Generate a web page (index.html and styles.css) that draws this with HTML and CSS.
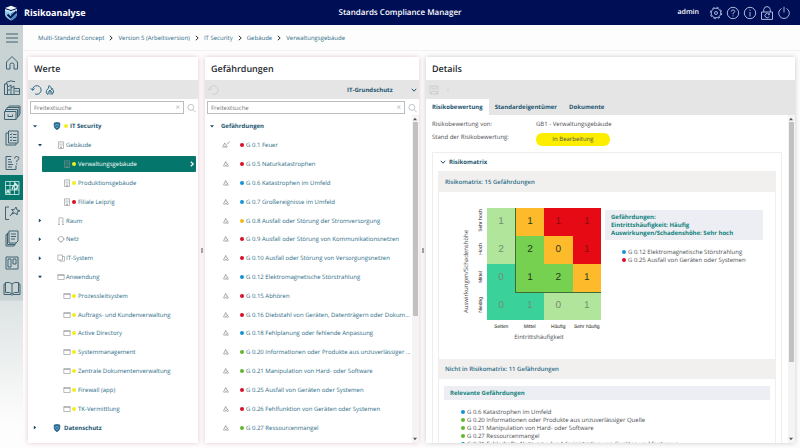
FILE: index.html
```html
<!DOCTYPE html>
<html lang="de">
<head>
    <meta charset="UTF-8">
    <meta name="viewport" content="width=device-width, initial-scale=1.0">
    <title>Risikoanalyse | Standards Compliance Manager</title>
    <link rel="stylesheet" href="styles.css">
</head>
<body>

    <!-- Icon symbols -->
    <svg class="sprite" aria-hidden="true">
        <symbol id="i-shield" viewBox="0 0 10 10"><path d="M1.5 1.2Q5 0 8.5 1.2V5Q8.500 8 5 9.700Q1.500 8 1.500 5Z" fill="#1f6c93" stroke="#174f70" stroke-width=".8"/><path d="M3.500 3H6.500V5.500L5 7.500L3.500 5.500Z" fill="none" stroke="#8fc0d8" stroke-width=".8"/></symbol>
        <symbol id="i-building" viewBox="0 0 8 8"><path d="M1.500.8H6.500V7.500H1.500ZM3.500 7.500V6H4.500V7.500" /><path d="M2.600 2.200H5.400M2.600 3.500H5.400M2.600 4.800H5.400" stroke-dasharray="1 .8"/></symbol>
        <symbol id="i-door" viewBox="0 0 8 8"><path d="M2 7.500V.8H6V7.500M1 7.500H3M5 7.500H7M5 4V5"/></symbol>
        <symbol id="i-net" viewBox="0 0 8 8"><circle cx="4" cy="4" r="2.600"/><path d="M0 4H2M6 4H8M3 6.500L4 7.500L5 6.500"/></symbol>
        <symbol id="i-system" viewBox="0 0 8 8"><path d="M.8 1H5.500V6H.8ZM5.500 2.500H7.500V7.200H3V6"/></symbol>
        <symbol id="i-window" viewBox="0 0 8 8"><path d="M.8 1.500H7.200V6.500H.8ZM.8 2.500H7.200"/></symbol>
        <symbol id="i-flame" viewBox="0 0 8 8"><path d="M2.300 6.800Q1 5.500 2.500 4L3.700 1.500Q4.200 3 5.200 4Q6.900 5.700 5.700 6.800M3.300 6.500Q3.100 5.500 4 4.800Q4.900 5.500 4.700 6.500"/></symbol>
        <symbol id="i-flame-large" viewBox="0 0 12 12"><path d="M4 10.500Q1 9 2.500 6.500Q4.500 5 5.200 1.500Q7.500 3 7.500 5.500L8.500 4.500Q11 8.500 8 10.500Q8.500 8 6 6Q3.500 8.500 4 10.500ZM6 6V10.500"/></symbol>
        <symbol id="i-flame-check" viewBox="0 0 8 8"><path d="M1.200 6.800Q.4 5.500 1.700 4L2.700 2Q3.200 3 4.200 4Q5.500 5.700 4.500 6.800M2.300 6.500Q2.200 5.500 2.900 4.900Q3.700 5.500 3.500 6.500M5.300 1.800L6 2.600L7.500.5"/></symbol>
        <symbol id="i-undo" viewBox="0 0 12 12"><path d="M2.500 6A4.300 4.300 0 1 1 5 9.900M.7 4.300L2.500 6.300L4.600 4.600"/></symbol>
        <symbol id="i-search" viewBox="0 0 10 10"><circle cx="4.300" cy="4.300" r="3.300"/><path d="M6.700 6.700L9.500 9.500"/></symbol>
        <symbol id="i-down" viewBox="0 0 6 6"><path d="M.8 1.800L3 4.200L5.200 1.800"/></symbol>
        <symbol id="i-right" viewBox="0 0 6 6"><path d="M1.800.8L4.200 3L1.800 5.200"/></symbol>
    </svg>

    <header class="topbar">
        <div class="brand">
            <svg class="logo" viewBox="0 0 14 16" aria-hidden="true">
                <path d="M1 4V10Q2 13 7 15.500Q12 13 13 10V4L7 6Z" fill="#8fc3e4"/>
                <path d="M1 3L7 .8L13 3L7 5Z" fill="#f0f8fc"/>
                <path d="M1 4.200L7 6.200L13 4.200V6L7 8L1 6Z" fill="#c3e3f2"/>
                <path d="M7 8L13 6V10Q12 13 7 15.500Z" fill="#4d8fc0"/>
                <path d="M3.500 9.500L6.500 12.500L12.500 6.500" fill="none" stroke="#071250" stroke-width="1.800"/>
            </svg>
            <h1>Risikoanalyse</h1>
        </div>
        <strong class="product">Standards Compliance Manager</strong>
        <div class="user">
            <span class="user-name">admin</span>
            <button class="icon-btn" aria-label="Einstellungen"><svg viewBox="0 0 14 14"><circle cx="7" cy="7" r="4.800"/><circle cx="7" cy="7" r="5.700" stroke-dasharray="2.200 2.270"/><circle cx="7" cy="7" r="1.500"/></svg></button>
            <button class="icon-btn" aria-label="Hilfe"><svg viewBox="0 0 14 14"><circle cx="7" cy="7" r="5.700"/><path d="M5.200 5.600Q5.300 3.900 7 3.900Q8.800 4 8.800 5.500Q8.700 6.500 7 7.200V8.300M7 9.400V10.400"/></svg></button>
            <button class="icon-btn" aria-label="Info"><svg viewBox="0 0 14 14"><circle cx="7" cy="7" r="5.700"/><path d="M7 6V10.500M7 3.600V4.800"/></svg></button>
            <button class="icon-btn" aria-label="Passwort"><svg viewBox="0 0 14 14"><path d="M1.500 6H12.500V13.400H1.500ZM3.700 6V3.600Q4 .6 7 .6Q10 .6 10.300 3.600V6"/><path d="M9 8.300A2.200 2.200 0 1 0 9.200 10.500M9.500 7.300V8.700H8"/></svg></button>
            <button class="icon-btn" aria-label="Abmelden"><svg viewBox="0 0 14 14"><path d="M4.500 2.500A5.300 5.300 0 1 0 9.500 2.500M7 .8V6.500"/></svg></button>
        </div>
    </header>

    <div class="layout">
        <nav class="sidebar">
            <a href="#" aria-label="Menü"><svg viewBox="0 0 18 18"><path d="M3 5H15M3 9H15M3 13H15"/></svg></a>
            <a href="#" aria-label="Start"><svg viewBox="0 0 18 18"><path d="M3.500 8L9 2.500L14.500 8V15H11V10.500Q11 9 9 9Q7 9 7 10.500V15H3.500Z"/></svg></a>
            <a href="#" aria-label="Werte"><svg viewBox="0 0 18 18"><path d="M1.500 15.500V5H4.500V15.500M4.500 8L8 6V15.500M8 9L11 7V15.500M11 9.500H16.500V15.500H1.500M3 5Q3 2.500 6 2.500Q8 1 10 2.500H12M13 11.500V13M15 11.500V13M6 10V12"/></svg></a>
            <a href="#" aria-label="Ablage"><svg viewBox="0 0 18 18"><path d="M1.500 7.500H13V15.500H1.500ZM2.500 7.500V5.500H14.500V13.500L13 15.500M4 5.500V3.500H16V11.500L14.500 13.500M6 3.500V2H17V9.500L16 11.500M5 10.500V12.500H9.500V10.500"/></svg></a>
            <a href="#" aria-label="Checkliste"><svg viewBox="0 0 18 18"><path d="M5.500 2H15V14H5.500ZM5.500 4H3V16H13V14M7 5L8 6L9 4.500M10 5.500H13.500M7 8L8 9L9 7.500M10 8.500H13.500M7 11L8 12L9 10.500M10 11.500H13.500"/></svg></a>
            <a href="#" aria-label="Fragen"><svg viewBox="0 0 18 18"><path d="M8.500 2.500H3V15.500H13V11.500M5 5.500H8M5 8H9M5 10.500H10M5 13H9"/><path d="M11.500 4.500Q11.500 2.500 13.700 2.500Q16 2.600 15.900 4.500Q15.800 5.700 13.700 6.800V8M13.700 9.200V10.500"/></svg></a>
            <a class="active" href="#" aria-label="Risikoanalyse"><svg viewBox="0 0 18 18"><path d="M2.500 2.500V15.500H16M2.500 6.500H16M2.500 11H16M7 2.500V15.500M11.500 2.500V15.500M16 2.500V15.500M2.500 2.500H16" stroke-width=".8"/><path d="M9.500 10.500Q9 8 11 6.500L12.500 4.500Q14.500 6 14.500 8.500Q13 11 11 10M3.800 14.500Q3.500 12.500 5 11.500Q6.500 13 6 14.500" stroke-width="1.500"/></svg></a>
            <a href="#" aria-label="Maßnahmen"><svg viewBox="0 0 18 18"><path d="M6 3H2.500V15.500H6M7 12L10 8.500M8.500 5.500L11.300 5.700L13 3L14 6L17 6.700L14.200 8L14.200 11L12 8.800L9 10L10.300 7.300Z"/></svg></a>
            <a href="#" aria-label="Berichte"><svg viewBox="0 0 18 18"><path d="M6 2H15V12L13 14H6ZM6 4H4.500V15.500H12L13 14M4.500 5.500H3V17H11L12 15.500M8 5H13M8 7.500H13M8 10H12"/></svg></a>
            <a href="#" aria-label="Übersicht"><svg viewBox="0 0 18 18"><path d="M3 3H15V15H3ZM5 5H8V13H5ZM10 5H13V10H10Z"/></svg></a>
            <a href="#" aria-label="Handbuch"><svg viewBox="0 0 18 18"><path d="M9 5Q7 2.800 2.500 3.500V13.500Q7 12.800 9 15Q11 12.800 15.500 13.500V3.500Q11 2.800 9 5V15M2.500 5H1V15.500H8L9 16.500L10 15.500H17V5H15.500"/></svg></a>
        </nav>

        <main class="content">
            <nav class="breadcrumb" aria-label="Pfad">
                <a href="#">Multi-Standard Concept</a>
                <svg class="chev"><use href="#i-right"/></svg>
                <a href="#">Version 5 (Arbeitsversion)</a>
                <svg class="chev"><use href="#i-right"/></svg>
                <a href="#">IT Security</a>
                <svg class="chev"><use href="#i-right"/></svg>
                <a href="#">Gebäude</a>
                <svg class="chev"><use href="#i-right"/></svg>
                <a href="#">Verwaltungsgebäude</a>
            </nav>

            <div class="panels">
                <!-- Werte -->
                <section class="panel panel-values">
                    <h2>Werte</h2>
                    <div class="toolbar">
                        <button class="tool" aria-label="Zurücksetzen"><svg><use href="#i-undo"/></svg></button>
                        <button class="tool" aria-label="Gefährdungen filtern"><svg><use href="#i-flame-large"/></svg></button>
                    </div>
                    <div class="search">
                        <div class="search-box">
                            <input type="text" placeholder="Freitextsuche" aria-label="Werte durchsuchen">
                            <button class="clear" aria-label="Leeren">×</button>
                        </div>
                        <button class="find" aria-label="Suchen"><svg><use href="#i-search"/></svg></button>
                    </div>
                    <ul class="tree">
                        <li class="root"><i class="open"></i><svg><use href="#i-shield"/></svg><b class="dot yellow"></b><a href="#">IT Security</a></li>
                        <li class="group"><i class="open"></i><svg><use href="#i-building"/></svg><a href="#">Gebäude</a></li>
                        <li class="leaf selected"><svg><use href="#i-building"/></svg><b class="dot yellow"></b><a href="#">Verwaltungsgebäude</a><svg class="chev"><use href="#i-right"/></svg></li>
                        <li class="leaf"><svg><use href="#i-building"/></svg><b class="dot yellow"></b><a href="#">Produktionsgebäude</a></li>
                        <li class="leaf"><svg><use href="#i-building"/></svg><b class="dot red"></b><a href="#">Filiale Leipzig</a></li>
                        <li class="group"><i class="closed"></i><svg><use href="#i-door"/></svg><a href="#">Raum</a></li>
                        <li class="group"><i class="closed"></i><svg><use href="#i-net"/></svg><a href="#">Netz</a></li>
                        <li class="group"><i class="closed"></i><svg><use href="#i-system"/></svg><a href="#">IT-System</a></li>
                        <li class="group"><i class="open"></i><svg><use href="#i-window"/></svg><a href="#">Anwendung</a></li>
                        <li class="leaf"><svg><use href="#i-window"/></svg><b class="dot yellow"></b><a href="#">Prozessleitsystem</a></li>
                        <li class="leaf"><svg><use href="#i-window"/></svg><b class="dot yellow"></b><a href="#">Auftrags- und Kundenverwaltung</a></li>
                        <li class="leaf"><svg><use href="#i-window"/></svg><b class="dot yellow"></b><a href="#">Active Directory</a></li>
                        <li class="leaf"><svg><use href="#i-window"/></svg><b class="dot yellow"></b><a href="#">Systemmanagement</a></li>
                        <li class="leaf"><svg><use href="#i-window"/></svg><b class="dot yellow"></b><a href="#">Zentrale Dokumentenverwaltung</a></li>
                        <li class="leaf"><svg><use href="#i-window"/></svg><b class="dot yellow"></b><a href="#">Firewall (app)</a></li>
                        <li class="leaf"><svg><use href="#i-window"/></svg><b class="dot yellow"></b><a href="#">TK-Vermittlung</a></li>
                        <li class="root"><i class="closed"></i><svg><use href="#i-shield"/></svg><a href="#">Datenschutz</a></li>
                    </ul>
                </section>

                <div class="splitter"></div>

                <!-- Gefährdungen -->
                <section class="panel panel-threats">
                    <h2>Gefährdungen</h2>
                    <div class="toolbar">
                        <button class="tool" aria-label="Zurücksetzen" disabled><svg><use href="#i-undo"/></svg></button>
                        <div class="catalog">
                            <select aria-label="Katalog"><option>IT-Grundschutz</option></select>
                            <svg class="chev"><use href="#i-down"/></svg>
                        </div>
                    </div>
                    <div class="search">
                        <div class="search-box">
                            <input type="text" placeholder="Freitextsuche" aria-label="Gefährdungen durchsuchen">
                            <button class="clear" aria-label="Leeren">×</button>
                        </div>
                        <button class="find" aria-label="Suchen"><svg><use href="#i-search"/></svg></button>
                    </div>
                    <div class="scroll-area">
                        <ul class="tree">
                            <li class="root"><i class="open"></i><a href="#">Gefährdungen</a></li>
                            <li class="threat"><svg><use href="#i-flame-check"/></svg><b class="dot red"></b><a href="#">G 0.1 Feuer</a></li>
                            <li class="threat"><svg><use href="#i-flame"/></svg><b class="dot red"></b><a href="#">G 0.5 Naturkatastrophen</a></li>
                            <li class="threat"><svg><use href="#i-flame"/></svg><b class="dot blue"></b><a href="#">G 0.6 Katastrophen im Umfeld</a></li>
                            <li class="threat"><svg><use href="#i-flame"/></svg><b class="dot blue"></b><a href="#">G 0.7 Großereignisse im Umfeld</a></li>
                            <li class="threat"><svg><use href="#i-flame"/></svg><b class="dot orange"></b><a href="#">G 0.8 Ausfall oder Störung der Stromversorgung</a></li>
                            <li class="threat"><svg><use href="#i-flame"/></svg><b class="dot red"></b><a href="#">G 0.9 Ausfall oder Störung von Kommunikationsnetzen</a></li>
                            <li class="threat"><svg><use href="#i-flame"/></svg><b class="dot red"></b><a href="#">G 0.10 Ausfall oder Störung von Versorgungsnetzen</a></li>
                            <li class="threat"><svg><use href="#i-flame"/></svg><b class="dot blue"></b><a href="#">G 0.12 Elektromagnetische Störstrahlung</a></li>
                            <li class="threat"><svg><use href="#i-flame"/></svg><b class="dot red"></b><a href="#">G 0.15 Abhören</a></li>
                            <li class="threat"><svg><use href="#i-flame"/></svg><b class="dot red"></b><a href="#">G 0.16 Diebstahl von Geräten, Datenträgern oder Dokum...</a></li>
                            <li class="threat"><svg><use href="#i-flame"/></svg><b class="dot blue"></b><a href="#">G 0.18 Fehlplanung oder fehlende Anpassung</a></li>
                            <li class="threat"><svg><use href="#i-flame"/></svg><b class="dot green"></b><a href="#">G 0.20 Informationen oder Produkte aus unzuverlässiger ...</a></li>
                            <li class="threat"><svg><use href="#i-flame"/></svg><b class="dot green"></b><a href="#">G 0.21 Manipulation von Hard- oder Software</a></li>
                            <li class="threat"><svg><use href="#i-flame"/></svg><b class="dot red"></b><a href="#">G 0.25 Ausfall von Geräten oder Systemen</a></li>
                            <li class="threat"><svg><use href="#i-flame"/></svg><b class="dot red"></b><a href="#">G 0.26 Fehlfunktion von Geräten oder Systemen</a></li>
                            <li class="threat"><svg><use href="#i-flame"/></svg><b class="dot green"></b><a href="#">G 0.27 Ressourcenmangel</a></li>
                        </ul>
                        <div class="scrollbar"><i class="up"></i><span class="thumb thumb-short"></span><i class="down"></i></div>
                    </div>
                </section>

                <div class="splitter"></div>

                <!-- Details -->
                <section class="panel panel-details">
                    <h2>Details</h2>
                    <div class="toolbar">
                        <button class="tool" aria-label="Speichern" disabled><svg viewBox="0 0 12 12"><path d="M2 2H10V10H2ZM4 2V5H8V2M3.500 10V7.500H8.500V10"/></svg></button>
                        <button class="tool tool-close" aria-label="Verwerfen" disabled>×</button>
                    </div>
                    <div class="tabs" role="tablist">
                        <button class="tab active" role="tab" aria-selected="true">Risikobewertung</button>
                        <button class="tab" role="tab">Standardeigentümer</button>
                        <button class="tab" role="tab">Dokumente</button>
                    </div>
                    <div class="scroll-area">
                        <div class="details">
                            <dl class="facts">
                                <dt>Risikobewertung von:</dt>
                                <dd>GB1 - Verwaltungsgebäude</dd>
                                <dt>Stand der Risikobewertung:</dt>
                                <dd><span class="pill">In Bearbeitung</span></dd>
                            </dl>

                            <div class="fieldset">
                                <h3><svg class="chev"><use href="#i-down"/></svg>Risikomatrix</h3>
                                <div class="card">
                                    <h4>Risikomatrix: 15 Gefährdungen</h4>
                                    <div class="matrix-row">
                                        <div class="matrix-wrap">
                                            <span class="axis-y">Auswirkungen/Schadenshöhe</span>
                                            <div class="matrix-col">
                                                <table class="matrix">
                                                    <tbody>
                                                        <tr><th><span>Sehr hoch</span></th><td class="lime">1</td><td class="amber strong edge-left">1</td><td class="crimson strong">1</td><td class="crimson strong">1</td></tr>
                                                        <tr><th><span>Hoch</span></th><td class="lime">2</td><td class="grass strong edge-left">2</td><td class="amber strong">0</td><td class="crimson strong">1</td></tr>
                                                        <tr><th><span>Mittel</span></th><td class="mint">0</td><td class="grass strong edge-left edge-bottom">1</td><td class="grass strong edge-bottom">2</td><td class="amber strong edge-bottom">1</td></tr>
                                                        <tr><th><span>Niedrig</span></th><td class="mint">0</td><td class="mint">1</td><td class="lime">0</td><td class="lime">1</td></tr>
                                                    </tbody>
                                                    <tfoot>
                                                        <tr><th></th><th>Selten</th><th>Mittel</th><th>Häufig</th><th>Sehr häufig</th></tr>
                                                    </tfoot>
                                                </table>
                                                <span class="axis-x">Eintrittshäufigkeit</span>
                                            </div>
                                        </div>
                                        <div class="cell-info">
                                            <h5>Gefährdungen:<br>Eintrittshäufigkeit: Häufig<br>Auswirkungen/Schadenshöhe: Sehr hoch</h5>
                                            <ul class="bullets">
                                                <li><b class="dot blue"></b>G 0.12 Elektromagnetische Störstrahlung</li>
                                                <li><b class="dot red"></b>G 0.25 Ausfall von Geräten oder Systemen</li>
                                            </ul>
                                        </div>
                                    </div>
                                    <h4>Nicht in Risikomatrix: 11 Gefährdungen</h4>
                                    <div class="relevant">
                                        <h5>Relevante Gefährdungen</h5>
                                        <ul class="bullets">
                                            <li><b class="dot blue"></b>G 0.6 Katastrophen im Umfeld</li>
                                            <li><b class="dot green"></b>G 0.20 Informationen oder Produkte aus unzuverlässiger Quelle</li>
                                            <li><b class="dot green"></b>G 0.21 Manipulation von Hard- oder Software</li>
                                            <li><b class="dot green"></b>G 0.27 Ressourcenmangel</li>
                                            <li><b class="dot blue"></b>G 0.31 Fehlerhafte Nutzung oder Administration von Geräten und Systemen</li>
                                        </ul>
                                    </div>
                                </div>
                            </div>
                        </div>
                        <div class="scrollbar"><i class="up"></i><span class="thumb"></span><i class="down"></i></div>
                    </div>
                </section>
            </div>
        </main>
    </div>

</body>
</html>
```

FILE: styles.css
```css
/* General */
* {
    box-sizing: border-box;
}

body {
    margin: 0;
    height: 100vh;
    display: flex;
    flex-direction: column;
    overflow: hidden;
    background: #fefdfd;
    font-family: "Open Sans", "Noto Sans", sans-serif;
    font-size: 6px;
    line-height: 8px;
    text-rendering: geometricPrecision;
    color: #4a4d50;
}

h1, h2, h3, h4, h5, ul, dl, dd {
    margin: 0;
    padding: 0;
}

ul { list-style: none; }

a {
    color: #2b6c86;
    text-decoration: none;
}

button, input, select {
    font: inherit;
    color: inherit;
    text-rendering: inherit;
    margin: 0;
    padding: 0;
    border: 0;
    background: none;
}

svg {
    flex: none;
    fill: none;
    stroke: currentColor;
}

.sprite {
    position: absolute;
    width: 0;
    height: 0;
}

.chev {
    width: 6px;
    height: 6px;
    stroke-width: 1;
}

/* Top bar */
.topbar {
    flex: none;
    display: grid;
    grid-template-columns: 1fr auto 1fr;
    align-items: center;
    height: 25px;
    padding: 0 9px 0 4px;
    background: #000f55;
    color: #ffffff;
}

.brand {
    display: flex;
    align-items: center;
    gap: 6px;
}

.logo {
    width: 14px;
    height: 16px;
    stroke: none;
}

h1 {
    font-size: 9px;
    line-height: 12px;
}

.product {
    padding-left: 5px;
    font-size: 8px;
    font-weight: 600;
}

.user {
    display: flex;
    justify-content: flex-end;
    align-items: center;
    gap: 3px;
}

.user-name {
    margin-right: 7px;
    font-size: 7px;
    font-weight: 600;
}

.icon-btn {
    display: flex;
    color: #a9b4dc;
}

.icon-btn svg {
    width: 14px;
    height: 14px;
}

/* Sidebar */
.layout {
    flex: 1;
    display: flex;
    min-height: 0;
}

.sidebar {
    flex: none;
    width: 23px;
    background: linear-gradient(to bottom, #c9d3d3 0, #c9d3d3 275px, #dde3e3 276px, #fefdfd 400px);
}

.sidebar a {
    display: flex;
    justify-content: center;
    align-items: center;
    height: 25px;
    color: #3f6274;
}

.sidebar svg {
    width: 18px;
    height: 18px;
}

.sidebar .active {
    background: #04766c;
    color: #d5efec;
}

/* Breadcrumb */
.content {
    flex: 1;
    display: flex;
    flex-direction: column;
    min-width: 0;
}

.breadcrumb {
    flex: none;
    display: flex;
    align-items: center;
    gap: 4px;
    height: 26px;
    padding-left: 15px;
    border-bottom: 1px solid #f3f1f1;
}

.breadcrumb .chev { color: #26313a; }

/* Panels */
.panels {
    flex: 1;
    display: flex;
    min-height: 0;
    padding: 6px 5px 5px;
}

.panel {
    display: flex;
    flex-direction: column;
    min-width: 0;
    background: #ffffff;
    box-shadow: 0 0 5px rgba(170, 110, 120, 0.35);
}

.panel-values { flex: 170 1 0; }
.panel-threats { flex: 214 1 0; }

.panel-details {
    flex: 369 1 0;
    box-shadow: 0 0 5px rgba(110, 110, 110, 0.35);
}

.splitter {
    flex: none;
    display: flex;
    justify-content: center;
    align-items: center;
    width: 7px;
}

.splitter::before {
    content: "";
    width: 2px;
    height: 5px;
    background: #a8a4a6;
}

h2 {
    flex: none;
    height: 23px;
    padding-left: 6px;
    font-size: 9px;
    font-weight: 600;
    line-height: 23px;
    color: #23282d;
}

.toolbar {
    flex: none;
    display: flex;
    align-items: center;
    gap: 2px;
    height: 19px;
    padding: 0 2px;
    background: #e5e5e5;
}

.tool {
    display: flex;
    color: #2c6985;
}

.tool svg {
    width: 12px;
    height: 12px;
}

.tool:disabled { color: #cfcfcf; }
.tool-close { padding-left: 4px; }

.catalog {
    flex: 1;
    display: flex;
    justify-content: flex-end;
    align-items: center;
    gap: 18px;
    color: #1d5570;
}

.catalog select {
    appearance: none;
    font-weight: 700;
}

.search {
    flex: none;
    display: flex;
    align-items: center;
    gap: 3px;
    padding: 2px 2px 1px;
}

.search-box {
    flex: 1;
    display: flex;
    height: 13px;
    padding: 0 3px;
    border: 1px solid #bdbdbd;
}

.search-box input {
    flex: 1;
    min-width: 0;
    outline: 0;
}

.search-box input::placeholder { color: #777777; }

.clear {
    font-size: 8px;
    color: #b5b5b5;
}

.find {
    display: flex;
    color: #b9bfc2;
}

.find svg {
    width: 9px;
    height: 10px;
}

/* Trees */
.scroll-area {
    flex: 1;
    display: flex;
    min-height: 0;
}

.tree {
    flex: 1;
    display: grid;
    grid-auto-rows: 1fr;
    min-width: 0;
    padding: 2px 2px 6px 5px;
}

.tree li {
    display: flex;
    align-items: center;
    min-width: 0;
    white-space: nowrap;
}

.tree svg {
    width: 8px;
    height: 8px;
    margin-right: 1px;
    stroke-width: 0.6;
    color: #8b8f92;
}

.tree i {
    flex: none;
    width: 4px;
    height: 4px;
    background: #1f4a5e;
}

.tree .open { clip-path: polygon(0 20%, 100% 20%, 50% 80%); }
.tree .closed { clip-path: polygon(20% 0, 20% 100%, 80% 50%); }

.root a {
    font-weight: 700;
    color: #1d5570;
}

.panel-values .root i { margin-right: 16px; }
.panel-threats .root i { margin-right: 7px; }

.tree .root svg { margin-right: 3px; }

.group { padding-left: 5px; }
.group i { margin-right: 15px; }

.leaf {
    margin-left: 9px;
    padding-left: 21px;
}

.tree .selected {
    margin-top: 1px;
    margin-bottom: 1px;
    border-radius: 1px;
    background: #04766c;
}

.selected a {
    flex: 1;
    color: #ffffff;
}

.tree .selected .chev {
    width: 6px;
    height: 8px;
    stroke-width: 1.2;
    color: #ffffff;
}

.threat { padding-left: 12px; }

.tree .threat svg {
    margin-right: 10px;
    stroke-width: 0.8;
}

.dot {
    flex: none;
    width: 4px;
    height: 4px;
    margin-right: 2px;
    border-radius: 50%;
}

.yellow { background: #f4ec1c; }
.red { background: #d80f27; }
.blue { background: #1593d6; }
.orange { background: #f2b81c; }
.green { background: #63b52f; }

/* Scrollbars */
.scrollbar {
    flex: none;
    display: flex;
    flex-direction: column;
    width: 7px;
    padding: 2px 1px;
    background: #f4f4f4;
}

.scrollbar i {
    width: 4px;
    height: 4px;
    background: #555555;
}

.up { clip-path: polygon(0 80%, 100% 80%, 50% 20%); }

.down {
    margin-top: auto;
    clip-path: polygon(0 20%, 100% 20%, 50% 80%);
}

.thumb {
    height: 74%;
    margin-top: 1px;
    background: #c1c1c1;
}

.thumb-short { height: 60%; }

/* Details */
.tabs {
    flex: none;
    display: flex;
    height: 16px;
    background: #e5e5e5;
}

.tab {
    padding: 0 6px;
    font-weight: 700;
    color: #1d5570;
}

.tab.active { background: #ffffff; }

.details {
    flex: 1;
    min-width: 0;
    padding: 5px 6px 0;
    overflow: hidden;
}

.facts {
    display: grid;
    grid-template-columns: 104px 1fr;
    row-gap: 5px;
    margin-bottom: 6px;
}

.pill {
    display: block;
    width: 74px;
    border-radius: 6px;
    background: #fdee00;
    line-height: 13px;
    text-align: center;
}

.fieldset {
    padding: 0 5px;
    border: 1px solid #eeeeee;
}

h3 {
    display: flex;
    align-items: center;
    gap: 3px;
    height: 18px;
    padding-left: 2px;
    font-size: 6px;
    color: #1d5570;
}

.card { border: 1px solid #f0efee; }

h4 {
    height: 20px;
    padding-left: 6px;
    background: #f1f0ef;
    font-size: 6px;
    font-weight: 600;
    line-height: 20px;
    color: #2b6c86;
}

h5 {
    padding: 3px 6px;
    background: #edeef3;
    font-size: 6px;
    color: #11827c;
}

.matrix-row {
    display: flex;
    gap: 4px;
    padding: 16px 12px 18px 23px;
}

.matrix-wrap {
    display: flex;
    align-items: flex-start;
    gap: 5px;
}

.axis-y {
    writing-mode: vertical-rl;
    transform: rotate(180deg);
    height: 126px;
    text-align: center;
}

.matrix-col {
    display: flex;
    flex-direction: column;
}

.matrix {
    table-layout: fixed;
    width: 126px;
    border-collapse: collapse;
    font-family: "Liberation Sans", Arial, sans-serif;
}

.matrix th {
    height: 13px;
    padding: 0;
    font-size: 5px;
    font-weight: 400;
    color: #222222;
    white-space: nowrap;
}

.matrix th:first-child { width: 12px; }

.matrix th span {
    writing-mode: vertical-rl;
    transform: rotate(180deg);
}

.matrix td {
    height: 28px;
    padding: 0;
    font-size: 10px;
    text-align: center;
    color: #6f8f72;
}

.matrix .strong { color: #24381a; }
.matrix .crimson { background: #e60a14; color: #8c0a10; }
.amber { background: #fdbb2c; }
.lime { background: #b0e59b; }
.grass { background: #76d150; }
.mint { background: #3bd19b; }
.edge-left { border-left: 1px solid #3f6b35; }
.edge-bottom { border-bottom: 1px solid #3f6b35; }

.axis-x {
    padding-left: 2px;
    text-align: center;
}

.cell-info {
    flex: 1;
    padding-top: 2px;
}

.bullets { padding: 8px 17px; }

.bullets li {
    display: flex;
    align-items: center;
    white-space: nowrap;
}

.relevant { padding: 7px 5px; }
```
